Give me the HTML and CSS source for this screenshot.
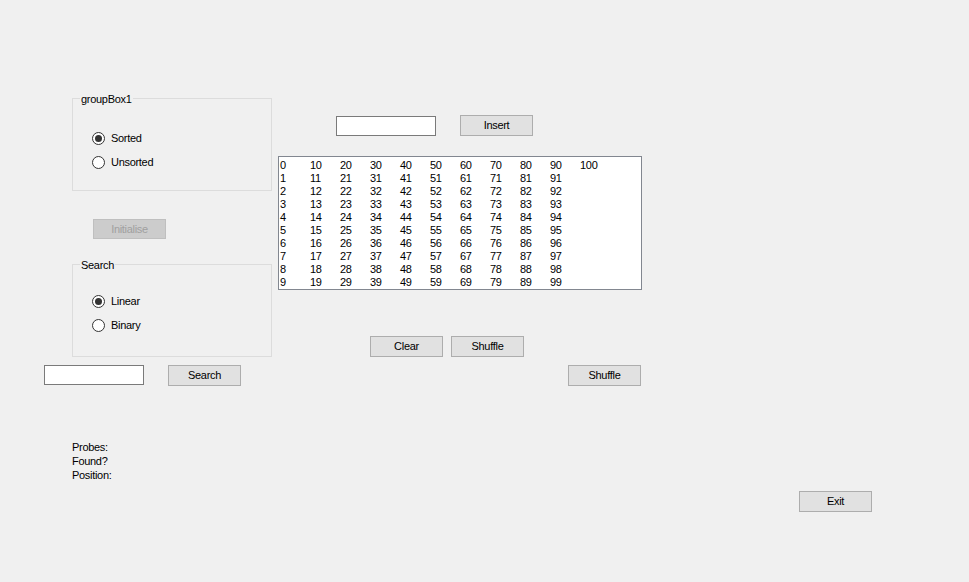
FILE: index.html
```html
<!DOCTYPE html>
<html>
<head>
<meta charset="utf-8">
<title>Form1</title>
<link rel="stylesheet" href="styles.css">
</head>
<body>
<div class="form">
  <div class="col-left">
    <div class="groupbox gb-sort">
      <span class="legend">groupBox1</span>
      <div class="radio"><span class="circle checked"></span><span>Sorted</span></div>
      <div class="radio"><span class="circle"></span><span>Unsorted</span></div>
    </div>
    <div class="btn btn-init disabled">Initialise</div>
    <div class="groupbox gb-search">
      <span class="legend">Search</span>
      <div class="radio"><span class="circle checked"></span><span>Linear</span></div>
      <div class="radio"><span class="circle"></span><span>Binary</span></div>
    </div>
    <div class="search-row">
      <div class="textbox tb-search"></div>
      <div class="btn btn-search">Search</div>
    </div>
    <div class="labels">
      <div>Probes:</div>
      <div>Found?</div>
      <div>Position:</div>
    </div>
  </div>
  <div class="col-center">
    <div class="insert-row">
      <div class="textbox tb-insert"></div>
      <div class="btn btn-insert">Insert</div>
    </div>
    <div class="listbox" id="listbox"></div>
    <div class="action-row">
      <div class="btn btn-clear">Clear</div>
      <div class="btn btn-shuffle">Shuffle</div>
    </div>
    <div class="btn btn-shuffle2">Shuffle</div>
  </div>
  <div class="col-right">
    <div class="btn btn-exit">Exit</div>
  </div>
</div>
<script src="script.js"></script>
</body>
</html>
```
FILE: script.js
```js
(function () {
  var lb = document.getElementById('listbox');
  for (var i = 0; i <= 100; i++) {
    var d = document.createElement('div');
    d.className = 'item';
    d.textContent = String(i);
    lb.appendChild(d);
  }
})();
```
FILE: styles.css
```css
* { box-sizing: border-box; }
html, body {
  margin: 0;
  padding: 0;
  background: #f0f0f0;
}
body {
  font-family: "Liberation Sans", Arial, sans-serif;
  font-size: 11px;
  letter-spacing: -0.3px;
  color: #000;
}
.form {
  width: 969px;
  height: 582px;
  display: flex;
  align-items: flex-start;
  overflow: hidden;
}

/* left column */
.col-left {
  width: 278px;
  flex: none;
  padding-top: 98px;
  display: flex;
  flex-direction: column;
  align-items: flex-start;
}
.groupbox {
  position: relative;
  width: 200px;
  height: 93px;
  border: 1px solid #dcdcdc;
  margin-left: 72px;
  padding-left: 19px;
  display: flex;
  flex-direction: column;
  gap: 11px;
}
.gb-sort { padding-top: 33px; }
.gb-search { padding-top: 30px; margin-top: 25px; }
.legend {
  position: absolute;
  top: -6px;
  left: 7px;
  padding: 0 1px;
  line-height: 13px;
  background: #f0f0f0;
}
.radio {
  display: flex;
  align-items: center;
  gap: 6px;
  height: 13px;
  line-height: 13px;
}
.circle {
  width: 13px;
  height: 13px;
  border: 1px solid #333;
  border-radius: 50%;
  background: #fff;
  display: flex;
  align-items: center;
  justify-content: center;
  flex: none;
}
.circle.checked::after {
  content: "";
  width: 7px;
  height: 7px;
  border-radius: 50%;
  background: #333;
}

.btn {
  width: 73px;
  height: 21px;
  border: 1px solid #adadad;
  background: #e1e1e1;
  display: flex;
  align-items: center;
  justify-content: center;
  line-height: 13px;
  flex: none;
}
.btn.disabled {
  background: #cccccc;
  border-color: #bfbfbf;
  color: #a0a0a0;
}
.btn-init {
  margin-top: 28px;
  margin-left: 93px;
  height: 20px;
}
.textbox {
  width: 100px;
  height: 20px;
  border: 1px solid #7a7a7a;
  background: #fff;
  flex: none;
}
.search-row {
  display: flex;
  align-items: flex-start;
  margin-top: 8px;
  margin-left: 44px;
}
.btn-search { margin-left: 24px; }
.labels {
  margin-top: 54px;
  margin-left: 72px;
  line-height: 14px;
}

/* center column */
.col-center {
  width: 364px;
  flex: none;
  padding-top: 115px;
  display: flex;
  flex-direction: column;
  align-items: flex-start;
}
.insert-row {
  display: flex;
  align-items: flex-start;
  margin-left: 58px;
}
.tb-insert { margin-top: 1px; }
.btn-insert { margin-left: 24px; height: 21px; }
.listbox {
  margin-top: 20px;
  width: 364px;
  height: 134px;
  border: 1px solid #828790;
  background: #fff;
  padding: 2px 0 0 1px;
  display: grid;
  grid-auto-flow: column;
  grid-template-rows: repeat(10, 13px);
  grid-auto-columns: 30px;
  line-height: 13px;
}
.item { white-space: nowrap; }
.action-row {
  display: flex;
  margin-top: 46px;
  margin-left: 92px;
  gap: 8px;
}
.btn-shuffle2 {
  margin-top: 8px;
  margin-left: 290px;
}

/* right column */
.col-right {
  flex: none;
  padding-top: 491px;
  margin-left: 157px;
}
.btn-exit { height: 21px; }
```
